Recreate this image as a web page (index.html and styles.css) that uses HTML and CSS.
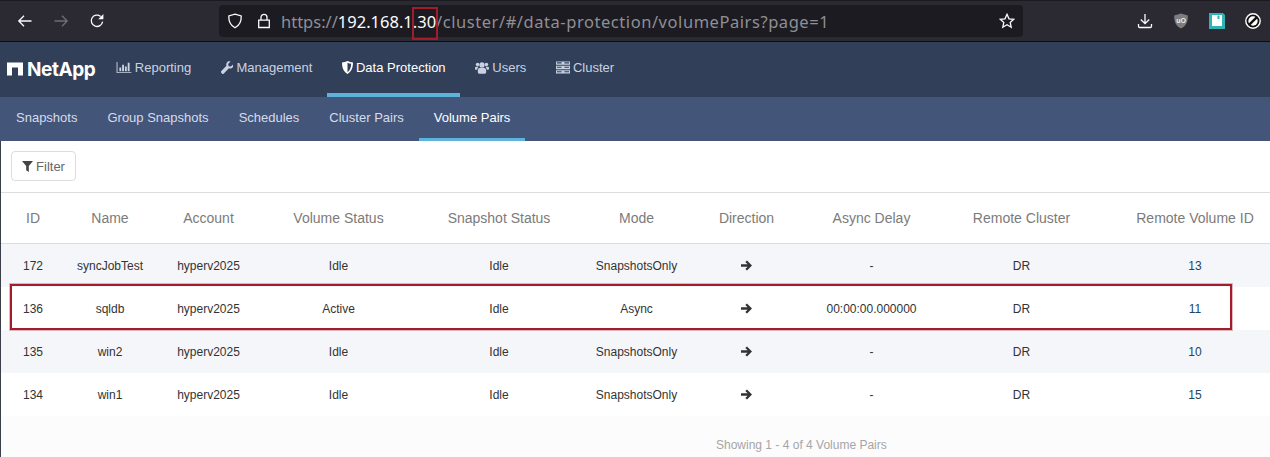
FILE: index.html
```html
<!DOCTYPE html>
<html lang="en">
<head>
    <meta charset="UTF-8">
    <meta name="viewport" content="width=device-width, initial-scale=1.0">
    <title>Volume Pairs</title>
    <link rel="stylesheet" href="styles.css">
</head>
<body>
    <div class="browser-bar">
        <div class="browser-left">
            <svg class="bicon" viewBox="0 0 16 16"><path d="M14.5 8H2M7 2.8 1.8 8 7 13.2" /></svg>
            <svg class="bicon dim" viewBox="0 0 16 16"><path d="M1.5 8H14M9 2.8 14.2 8 9 13.2" /></svg>
            <svg class="bicon" viewBox="0 0 16 16"><path d="M13.6 8.6A5.7 5.7 0 1 1 11.6 3.4" /><path class="solid" d="M14.4 1v5.2H9.2z" /></svg>
        </div>
        <div class="url-bar">
            <svg class="bicon shield-icon" viewBox="0 0 16 16"><path d="M8 1.2 14.2 3c.3 5.500-2 9.500-6.200 11.800C3.800 12.500 1.500 8.500 1.800 3z" /></svg>
            <svg class="bicon lock-icon" viewBox="0 0 16 16"><path d="M2.700 7.200h10.600v7.300H2.700zM5 7V4.300a3 3 0 0 1 6 0V7" /></svg>
            <div class="url-text">https://<span class="url-host">192.168.1.30</span><span class="url-path">/cluster/#/data-protection/volumePairs?page=1</span></div>
            <svg class="bicon star-icon" viewBox="0 0 16 16"><path d="M8 1.300 10 5.800l4.800.5-3.600 3.200 1 4.800L8 11.800l-4.200 2.500 1-4.800L1.200 6.300 6 5.800z" /></svg>
            <div class="url-mark"></div>
        </div>
        <div class="browser-right">
            <svg class="bicon" viewBox="0 0 16 16"><path d="M8 1v9.500M3.800 6.500 8 10.700l4.200-4.200M1.500 11v2.200c0 .8.500 1.300 1.300 1.300h10.400c.8 0 1.300-.5 1.300-1.300V11" /></svg>
            <svg class="ext-icon" viewBox="0 0 16 16"><path fill="#7d7d7d" d="M8 .5 14.800 2.400c.3 6.200-2 10.700-6.800 13.100C3.200 13.100.9 8.600 1.200 2.400z" /><text class="ublock-text" x="8" y="10">uO</text></svg>
            <svg class="ext-icon" viewBox="0 0 16 16"><path fill="#2fb3b3" d="M0 0h14l2 2v14H0z" /><path fill="#fff" d="M3 2h10v11H3z" /><path fill="#2fb3b3" d="M8.500 2.500h2V6h-2z" /></svg>
            <svg class="ext-icon" viewBox="0 0 16 16"><circle cx="8" cy="8" r="7.200" fill="#111" stroke="#fff" stroke-width="1.400" /><circle cx="8" cy="8" r="4.700" fill="#fff" /><path d="M4.300 11.700 11.700 4.300" stroke="#111" stroke-width="2.400" /></svg>
        </div>
    </div>

    <nav class="main-nav">
        <div class="logo">
            <svg class="logo-mark" viewBox="0 0 16 13"><path d="M0 0h16v13h-5V5H5v8H0z" /></svg>
            <span class="logo-text">NetApp</span>
        </div>
        <a class="nav-item">
            <svg class="nav-icon" viewBox="0 0 16 14"><path d="M0 1h1v11h15v1H0zM3 7h2v4H3zM6 4h2v7H6zM9 6h2v5H9zM12 2h2v9h-2z" /></svg>
            Reporting
        </a>
        <a class="nav-item">
            <svg class="nav-icon i-wrench" viewBox="0 0 14 14"><path d="M13.800 3.300c.4 1.700-.1 3.300-1.500 4.200-1 .7-2.300.8-3.400.4L3.200 13.600a1.500 1.500 0 0 1-2.200 0l-.6-.6a1.500 1.500 0 0 1 0-2.200L6.100 5.100C5.700 4 5.800 2.700 6.500 1.700 7.400.3 9 -.2 10.700.2L8 3l.5 2.500 2.500.5z" /></svg>
            Management
        </a>
        <a class="nav-item active">
            <svg class="nav-icon i-shield" viewBox="0 0 12 14"><path d="M0 1.500C2 1.500 4 1 6 0c2 1 4 1.500 6 1.500 0 6-1.800 10-6 12.500C1.800 11.500 0 7.500 0 1.500zM6 1.800v10.300c2.600-2 3.900-5 4-9.200-1.400-.1-2.700-.5-4-1.100z" /></svg>
            Data Protection
        </a>
        <a class="nav-item">
            <svg class="nav-icon i-wide" viewBox="0 0 16 14"><circle cx="8" cy="4" r="3" /><circle cx="2.900" cy="3.500" r="2" /><circle cx="13.100" cy="3.500" r="2" /><path d="M3.800 8.500C4.500 7.500 6 7.400 8 7.400s3.500.1 4.200 1.100c.6.900.6 3 .6 3.900 0 1-.8 1.600-1.600 1.600H4.800c-.8 0-1.600-.6-1.600-1.600 0-.9 0-3 .6-3.900zM0 7.500C0 6.500.8 6 1.500 6h2.700C3.200 7 2.700 8 2.500 9.500H1C.4 9.500 0 9 0 8.400zM16 7.500C16 6.500 15.200 6 14.500 6h-2.700c1 1 1.500 2 1.700 3.500H15c.6 0 1-.5 1-1.100z" /></svg>
            Users
        </a>
        <a class="nav-item">
            <svg class="nav-icon i-wide" viewBox="0 0 15 13"><path d="M0 0h15v3.600H0zM0 4.700h15v3.600H0zM0 9.400h15V13H0z" /><path class="server-cut" d="M9 1h5v1.200H9zM1 1h5v1.200H1zM9 5.700h5v1.200H9zM1 5.700h5v1.200H1zM9 10.400h5v1.200H9zM1 10.400h5v1.200H1z" /></svg>
            Cluster
        </a>
    </nav>

    <nav class="sub-nav">
        <a class="sub-item">Snapshots</a>
        <a class="sub-item">Group Snapshots</a>
        <a class="sub-item">Schedules</a>
        <a class="sub-item">Cluster Pairs</a>
        <a class="sub-item active">Volume Pairs</a>
    </nav>

    <main class="content">
        <div class="toolbar">
            <button class="filter-btn">
                <svg class="filter-icon" viewBox="0 0 10 10"><path d="M0 0h10L6.200 4.500V10L3.800 8.300V4.500z" /></svg>
                Filter
            </button>
        </div>

        <table class="pairs">
            <thead>
                <tr>
                    <th class="c-id">ID</th>
                    <th class="c-name">Name</th>
                    <th class="c-account">Account</th>
                    <th class="c-vstatus">Volume Status</th>
                    <th class="c-sstatus">Snapshot Status</th>
                    <th class="c-mode">Mode</th>
                    <th class="c-dir">Direction</th>
                    <th class="c-delay">Async Delay</th>
                    <th class="c-cluster">Remote Cluster</th>
                    <th class="c-volume">Remote Volume ID</th>
                </tr>
            </thead>
            <tbody>
                <tr>
                    <td>172</td><td>syncJobTest</td><td>hyperv2025</td><td>Idle</td><td>Idle</td><td>SnapshotsOnly</td>
                    <td><svg class="arrow" viewBox="0 0 11 11"><path d="M6 .4 11 5.500 6 10.600 4.300 8.900 6.600 6.700H0V4.300h6.600L4.300 2.100z" /></svg></td>
                    <td>-</td><td>DR</td><td class="c-volume link">13</td>
                </tr>
                <tr>
                    <td>136</td><td>sqldb</td><td>hyperv2025</td><td>Active</td><td>Idle</td><td>Async</td>
                    <td><svg class="arrow" viewBox="0 0 11 11"><path d="M6 .4 11 5.500 6 10.600 4.300 8.900 6.600 6.700H0V4.300h6.600L4.300 2.100z" /></svg></td>
                    <td>00:00:00.000000</td><td>DR</td><td class="c-volume link">11</td>
                </tr>
                <tr>
                    <td>135</td><td>win2</td><td>hyperv2025</td><td>Idle</td><td>Idle</td><td>SnapshotsOnly</td>
                    <td><svg class="arrow" viewBox="0 0 11 11"><path d="M6 .4 11 5.500 6 10.600 4.300 8.900 6.600 6.700H0V4.300h6.600L4.300 2.100z" /></svg></td>
                    <td>-</td><td>DR</td><td class="c-volume link">10</td>
                </tr>
                <tr>
                    <td>134</td><td>win1</td><td>hyperv2025</td><td>Idle</td><td>Idle</td><td>SnapshotsOnly</td>
                    <td><svg class="arrow" viewBox="0 0 11 11"><path d="M6 .4 11 5.500 6 10.600 4.300 8.900 6.600 6.700H0V4.300h6.600L4.300 2.100z" /></svg></td>
                    <td>-</td><td>DR</td><td class="c-volume link">15</td>
                </tr>
            </tbody>
        </table>

        <div class="table-footer">Showing 1 - 4 of 4 Volume Pairs</div>
        <div class="row-mark"></div>
    </main>
</body>
</html>
```

FILE: styles.css
```css
html, body {
    height: 100%;
}
body {
    margin: 0;
    font-family: "Liberation Sans", Arial, sans-serif;
    background-color: #fcfcfc;
    overflow: hidden;
}
svg {
    display: block;
    flex: none;
}

/* browser chrome */
.browser-bar {
    height: 42px;
    box-sizing: border-box;
    display: flex;
    align-items: center;
    background-color: #2b2a33;
    border-top: 1px solid #1c1b22;
    border-bottom: 1px solid #0c0c0d;
}
.bicon {
    width: 16px;
    height: 16px;
    fill: none;
    stroke: #fbfbfe;
    stroke-width: 1.3;
}
.bicon .solid {
    fill: #fbfbfe;
    stroke: none;
}
.bicon.dim {
    stroke: #6f6e75;
}
.browser-left {
    width: 219px;
    display: flex;
    align-items: center;
    gap: 20px;
    padding-left: 17px;
    box-sizing: border-box;
}
.url-bar {
    position: relative;
    width: 804px;
    height: 32px;
    display: flex;
    align-items: center;
    background-color: #1c1b22;
    border-radius: 4px;
}
.shield-icon {
    margin-left: 8px;
}
.lock-icon {
    margin-left: 13px;
}
.url-text {
    margin-left: 9px;
    font-family: "Noto Sans", sans-serif;
    font-size: 16.5px;
    color: #8f8f94;
    white-space: nowrap;
}
.url-host {
    color: #fbfbfe;
}
.url-path {
    letter-spacing: 0.55px;
}
.star-icon {
    position: absolute;
    right: 8px;
    top: 8px;
}
.url-mark {
    position: absolute;
    left: 193px;
    top: 2px;
    width: 26px;
    height: 33px;
    box-sizing: border-box;
    border: 2px solid #a31c2c;
}
.browser-right {
    flex: 1;
    display: flex;
    align-items: center;
    gap: 20px;
    padding-left: 114px;
}
.ext-icon {
    width: 16px;
    height: 16px;
}
.ublock-text {
    font-size: 7px;
    font-weight: bold;
    fill: #eee;
    text-anchor: middle;
}

/* main nav */
.main-nav {
    height: 55px;
    display: flex;
    background-color: #323f58;
}
.logo {
    width: 101px;
    display: flex;
    align-items: center;
    padding-left: 7px;
    box-sizing: border-box;
    gap: 4px;
    color: #fff;
}
.logo-mark {
    width: 16px;
    height: 14px;
    margin-bottom: 2px;
    fill: #fff;
}
.logo-text {
    font-family: Inter, sans-serif;
    font-weight: 700;
    font-size: 19px;
    letter-spacing: -0.45px;
}
.nav-item {
    display: flex;
    align-items: center;
    gap: 3px;
    padding: 0 14.85px;
    font-size: 13px;
    color: #c9d2e3;
    box-sizing: border-box;
    border-bottom: 4px solid transparent;
}
.nav-item.active {
    color: #fff;
    border-bottom-color: #5eb3dc;
}
.nav-icon {
    width: 16px;
    height: 13px;
    fill: #c9d2e3;
}
.nav-item.active .nav-icon {
    fill: #fff;
}
.i-wrench {
    width: 12.5px;
}
.i-shield {
    width: 11px;
}
.i-wide {
    width: 14px;
}
.server-cut {
    fill: #323f58;
}

/* sub nav */
.sub-nav {
    height: 44px;
    display: flex;
    padding-left: 1px;
    background-color: #44557a;
}
.sub-item {
    display: flex;
    align-items: center;
    padding: 0 15px;
    font-size: 13px;
    color: #d5dcea;
    box-sizing: border-box;
    border-bottom: 3px solid transparent;
}
.sub-item.active {
    color: #fff;
    border-bottom-color: #5eb3dc;
}

/* page content */
.content {
    position: relative;
}
.content::before {
    content: "";
    position: absolute;
    left: 0;
    top: 0;
    width: 1px;
    height: 316px;
    background-color: #3a3f4a;
}
.toolbar {
    height: 51px;
    padding: 10px 0 0 11px;
    box-sizing: border-box;
    background-color: #fff;
}
.filter-btn {
    width: 65px;
    height: 30px;
    display: flex;
    align-items: center;
    justify-content: center;
    gap: 3px;
    padding: 0;
    font-family: inherit;
    font-size: 13px;
    color: #666;
    background-color: #fff;
    border: 1px solid #ddd;
    border-radius: 4px;
}
.filter-icon {
    width: 11px;
    height: 11px;
    fill: #444;
}
.pairs {
    width: 1270px;
    table-layout: fixed;
    border-collapse: collapse;
    background-color: #fff;
}
.pairs th {
    height: 50px;
    padding: 0;
    font-size: 14px;
    font-weight: normal;
    color: #7b7b7b;
    border-top: 1px solid #ddd;
    border-bottom: 1px solid #ddd;
}
.pairs td {
    height: 43px;
    padding: 0;
    font-size: 12px;
    color: #333;
    text-align: center;
}
.pairs tbody tr:nth-child(odd) {
    background-color: #f5f6fa;
}
.pairs td .arrow {
    margin: 0 auto;
}
.arrow {
    width: 11px;
    height: 11px;
    fill: #333;
}
.c-id { width: 66px; }
.c-name { width: 88px; }
.c-account { width: 109px; }
.c-vstatus { width: 151px; }
.c-sstatus { width: 170px; }
.c-mode { width: 105px; }
.c-dir { width: 115px; }
.c-delay { width: 135px; }
.c-cluster { width: 165px; }
.pairs .c-volume {
    padding-left: 16px;
}
.pairs .link {
    color: #23465c;
}
.table-footer {
    margin-top: 22px;
    margin-left: 716px;
    font-size: 12px;
    color: #a5a5a8;
}
.row-mark {
    position: absolute;
    left: 10px;
    top: 143px;
    width: 1222px;
    height: 46px;
    box-sizing: border-box;
    border: 2px solid #a31c2c;
    box-shadow: 0 0 0 1px rgba(163, 28, 44, 0.3);
    pointer-events: none;
}
```
